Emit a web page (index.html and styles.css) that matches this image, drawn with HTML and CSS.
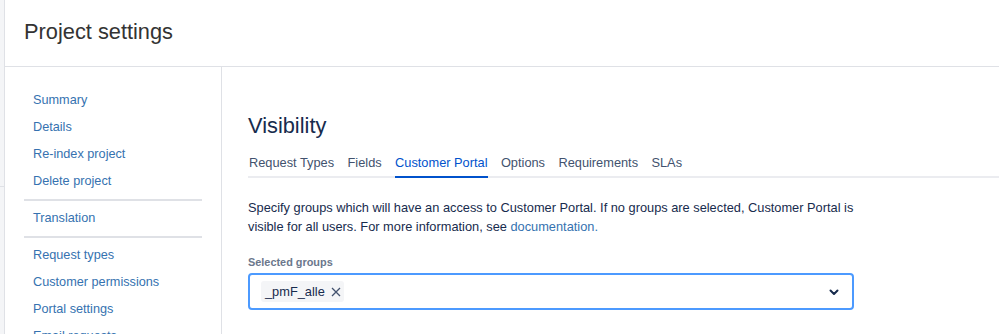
FILE: index.html
```html
<!DOCTYPE html>
<html lang="en">

<head>
    <meta charset="UTF-8">
    <meta name="viewport" content="width=device-width, initial-scale=1.0">
    <title>Project settings</title>
    <link rel="stylesheet" href="styles.css">
</head>

<body>
    <div class="page">
        <div class="gutter">
            <div class="gutter-mark"></div>
        </div>
        <div class="main-area">
            <header class="page-header">
                <h1>Project settings</h1>
            </header>
            <div class="columns">
                <nav class="sidebar">
                    <ul class="nav-group">
                        <li><a href="#">Summary</a></li>
                        <li><a href="#">Details</a></li>
                        <li><a href="#">Re-index project</a></li>
                        <li><a href="#">Delete project</a></li>
                    </ul>
                    <ul class="nav-group">
                        <li><a href="#">Translation</a></li>
                    </ul>
                    <ul class="nav-group">
                        <li><a href="#">Request types</a></li>
                        <li><a href="#">Customer permissions</a></li>
                        <li><a href="#">Portal settings</a></li>
                        <li><a href="#">Email requests</a></li>
                    </ul>
                </nav>
                <main class="content">
                    <h2>Visibility</h2>
                    <ul class="tabs">
                        <li>Request Types</li>
                        <li>Fields</li>
                        <li class="active">Customer Portal</li>
                        <li>Options</li>
                        <li>Requirements</li>
                        <li>SLAs</li>
                    </ul>
                    <p class="intro">Specify groups which will have an access to Customer Portal. If no groups are selected, Customer Portal is visible for all users. For more information, see <a href="#">documentation.</a></p>
                    <label class="field-label">Selected groups</label>
                    <div class="select-box">
                        <span class="tag">_pmF_alle
                            <svg class="tag-remove" width="10" height="10" viewBox="0 0 10 10">
                                <path d="M1 1 L9 9 M9 1 L1 9" stroke="#42526e" stroke-width="1.3" fill="none" />
                            </svg>
                        </span>
                        <svg class="chevron" width="12" height="12" viewBox="0 0 12 12">
                            <path d="M2.5 4.5 L6 8 L9.5 4.5" stroke="#172b4d" stroke-width="2" fill="none" stroke-linecap="round" stroke-linejoin="round" />
                        </svg>
                    </div>
                </main>
            </div>
        </div>
    </div>
</body>

</html>
```

FILE: styles.css
```css
body {
    margin: 0;
    background-color: #ffffff;
    font-family: "Liberation Sans", Arial, sans-serif;
    color: #172b4d;
    overflow: hidden;
}

.page {
    display: flex;
    height: 334px;
}

.gutter {
    width: 4px;
    background-color: #f4f5f7;
    border-right: 1px solid #dfe1e6;
}

.gutter-mark {
    height: 186px;
    border-bottom: 1px solid #dfe1e6;
}

.main-area {
    flex: 1;
}

.page-header {
    height: 66px;
    border-bottom: 1px solid #dfe1e6;
    padding-left: 19px;
    display: flex;
    align-items: center;
}

.page-header h1 {
    margin: 0 0 3px 0;
    font-size: 21.8px;
    font-weight: normal;
    color: #333333;
}

.columns {
    display: flex;
}

.sidebar {
    width: 216px;
    border-right: 1px solid #dfe1e6;
    padding-top: 20px;
    min-height: 280px;
}

.nav-group {
    list-style: none;
    margin: 0 19px;
    padding: 0;
}

.nav-group + .nav-group {
    border-top: 2px solid #dfe1e6;
    margin-top: 4px;
    padding-top: 4px;
}

.nav-group li {
    line-height: 27px;
    font-size: 12.7px;
    padding-left: 9px;
}

.nav-group a {
    color: #3572b0;
    text-decoration: none;
}

.content {
    flex: 1;
    padding: 45px 0 0 26px;
}

.content h2 {
    margin: 0;
    font-size: 21.8px;
    line-height: 28px;
    font-weight: normal;
    color: #172b4d;
}

.tabs {
    list-style: none;
    margin: 13px 0 0 0;
    padding: 0 0 0 1px;
    display: flex;
    gap: 13.4px;
    border-bottom: 2px solid #ebecf0;
}

.tabs li {
    font-size: 12.8px;
    line-height: 20px;
    padding-bottom: 3px;
    color: #42526e;
    border-bottom: 2px solid transparent;
    margin-bottom: -2px;
}

.tabs li.active {
    color: #0052cc;
    border-bottom-color: #0052cc;
}

.intro {
    width: 606px;
    margin: 20px 0 0 0;
    font-size: 12.8px;
    line-height: 19px;
    color: #172b4d;
}

.intro a {
    color: #3572b0;
    text-decoration: none;
}

.field-label {
    display: block;
    margin-top: 18px;
    font-size: 10.9px;
    line-height: 16px;
    font-weight: bold;
    color: #6b778c;
}

.select-box {
    box-sizing: border-box;
    width: 606px;
    height: 37px;
    margin-top: 3px;
    border: 2px solid #4c9aff;
    border-radius: 4px;
    display: flex;
    align-items: center;
    justify-content: space-between;
    padding: 0 12px 0 11px;
}

.tag {
    display: flex;
    align-items: center;
    gap: 6px;
    background-color: #f4f5f7;
    border-radius: 3px;
    padding: 0 3px 0 4px;
    height: 21px;
    font-size: 12.8px;
    color: #172b4d;
}

.chevron {
    display: block;
}
```
